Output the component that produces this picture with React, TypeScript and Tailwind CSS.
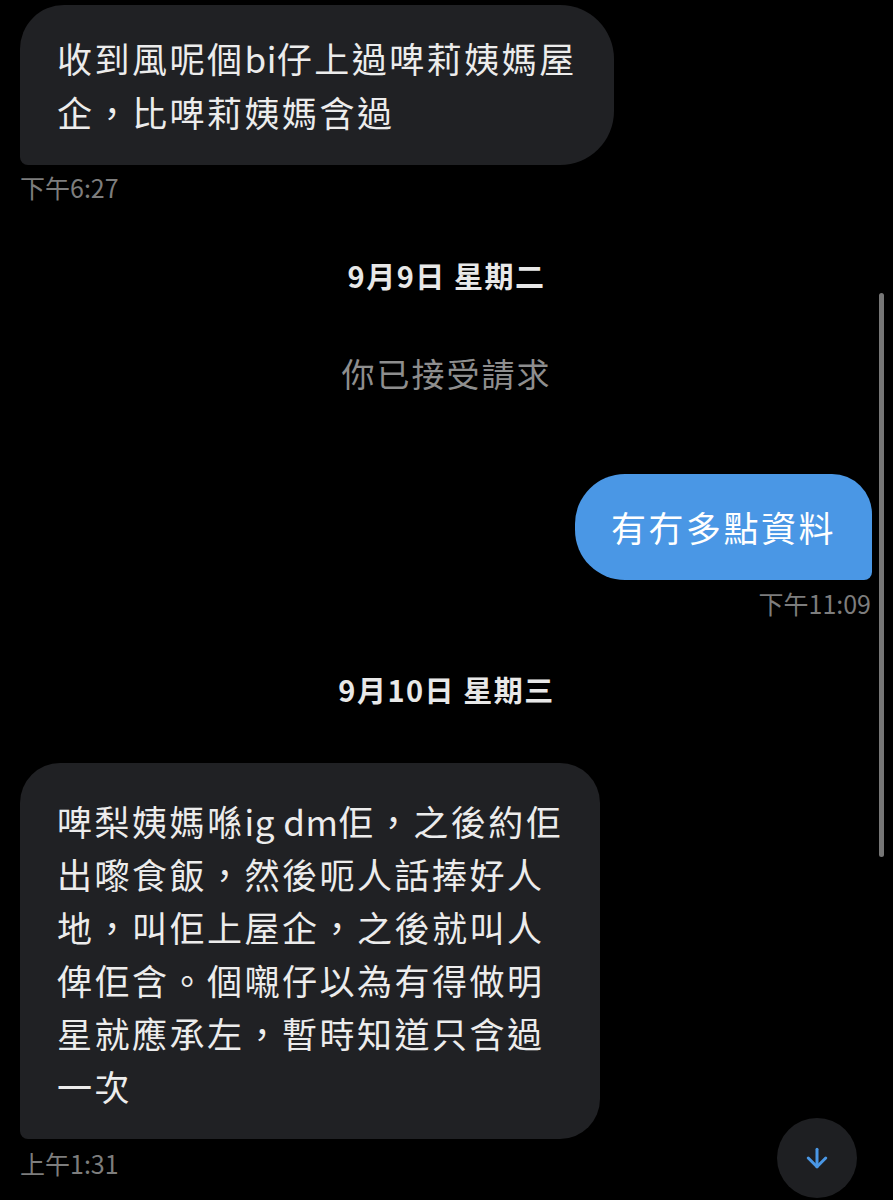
import { ArrowDown } from "lucide-react";
import type { ReactNode } from "react";

const font = { fontFamily: '"Noto Sans CJK TC", "Noto Sans", sans-serif' };

const Bubble = ({ lines, className }: { lines: ReactNode[]; className: string }) => (
  <div className={className}>
    {lines.map((l, i) => (
      <div key={i} className="whitespace-nowrap">
        {l}
      </div>
    ))}
  </div>
);

const Time = ({ text, right }: { text: string; right?: boolean }) => (
  <div className={`text-[25px] text-[#7d7d7d] leading-none ${right ? "text-right pr-[22px]" : "pl-[20px]"}`}>{text}</div>
);

const DateLabel = ({ text }: { text: string }) => (
  <div className="text-center text-[29px] font-bold tracking-[1.5px] text-[#e8e8e8] leading-none">{text}</div>
);

const Latin = ({ children }: { children: ReactNode }) => <span className="tracking-[0.5px]">{children}</span>;

export default function App() {
  return (
    <div className="relative h-[1200px] w-[893px] overflow-hidden bg-black" style={font}>
      <div className="flex flex-col pt-[5px]">
        <div className="flex">
          <Bubble
            className="ml-[20px] rounded-tl-[44px] rounded-tr-[54px] rounded-br-[54px] rounded-bl-[8px] bg-[#202124] px-[37px] pt-[26px] pb-[26px] text-[35px] leading-[54px] tracking-[2.5px] text-[#ececec]"
            lines={[
              <>
                收到風呢個<Latin>bi</Latin>仔上過啤莉姨媽屋
              </>,
              "企，比啤莉姨媽含過",
            ]}
          />
        </div>
        <div className="mt-[10px]">
          <Time text="下午6:27" />
        </div>
        <div className="mt-[61px]">
          <DateLabel text="9月9日 星期二" />
        </div>
        <div className="mt-[67px] text-center text-[33px] leading-none tracking-[2px] text-[#8e8e8e]">你已接受請求</div>
        <div className="mt-[84px] flex justify-end pr-[21px]">
          <Bubble
            className="rounded-tl-[50px] rounded-tr-[40px] rounded-br-[8px] rounded-bl-[50px] bg-[#4a97e5] px-[36px] pt-[27px] pb-[27px] text-[35px] leading-[52px] tracking-[2.5px] text-white"
            lines={["有冇多點資料"]}
          />
        </div>
        <div className="mt-[11px]">
          <Time text="下午11:09" right />
        </div>
        <div className="mt-[59px]">
          <DateLabel text="9月10日 星期三" />
        </div>
        <div className="mt-[59px] flex">
          <Bubble
            className="ml-[20px] rounded-tl-[40px] rounded-tr-[40px] rounded-br-[40px] rounded-bl-[8px] bg-[#202124] px-[37px] pt-[31px] pb-[27px] text-[35px] leading-[53px] tracking-[2.5px] text-[#ececec]"
            lines={[
              <>
                啤梨姨媽喺<Latin>ig dm</Latin>佢，之後約佢
              </>,
              "出嚟食飯，然後呃人話捧好人",
              "地，叫佢上屋企，之後就叫人",
              "俾佢含。個嚫仔以為有得做明",
              "星就應承左，暫時知道只含過",
              "一次",
            ]}
          />
        </div>
        <div className="mt-[12px]">
          <Time text="上午1:31" />
        </div>
      </div>

      {/* scrollbar */}
      <div className="absolute left-[879px] top-[293px] h-[564px] w-[5px] rounded-full bg-[#767676]" />

      {/* scroll to bottom */}
      <div className="absolute left-[777px] top-[1118px] flex h-[80px] w-[80px] items-center justify-center rounded-full bg-[#1e1f22]">
        <ArrowDown className="text-[#4a97e5]" size={30} strokeWidth={2.4} />
      </div>
    </div>
  );
}
